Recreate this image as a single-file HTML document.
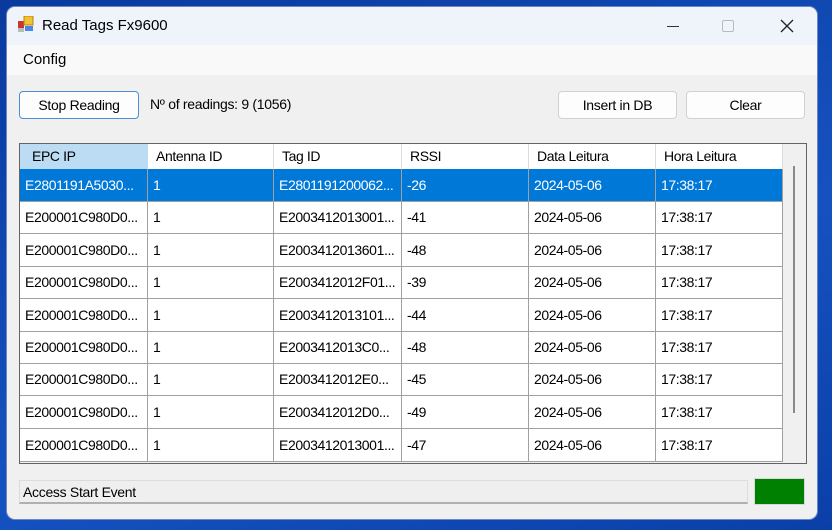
<!DOCTYPE html>
<html><head><style>
*{margin:0;padding:0;box-sizing:border-box}
body{width:832px;height:530px;overflow:hidden;background:linear-gradient(160deg,#0a3a9e,#1552c0 60%,#0b3fa8);font-family:"Liberation Sans",sans-serif;position:relative}
.win{position:absolute;left:7px;top:7px;width:810px;height:512px;background:#f0f0f0;border-radius:8px;overflow:hidden;box-shadow:0 0 0 1px #6b86c4}
.title{position:absolute;left:0;top:0;width:100%;height:38px;background:#eff3fa}
.menu{position:absolute;left:0;top:38px;width:100%;height:30px;background:#f9f9f9}
.abs{position:absolute}
.t{font-size:14px;color:#000;white-space:nowrap;letter-spacing:-0.3px}
.btn{position:absolute;height:28px;border:1px solid #d0d0d0;border-radius:4px;background:#fdfdfd;font-size:14px;text-align:center;line-height:26px;letter-spacing:-0.3px}
.grid{position:absolute;left:12px;top:136px;width:788px;height:321px;border:1px solid #646464;background:#f0f0f0}
.cell{position:absolute;font-size:14px;letter-spacing:-0.4px;padding-left:5px;white-space:nowrap;overflow:hidden;background:#fff;border-right:1px solid #a0a0a0;border-bottom:1px solid #a0a0a0}
</style></head><body>
<div class="win">
 <div class="title">
  <svg class="abs" style="left:11px;top:9px" width="17" height="17"><rect x="0" y="5" width="6" height="7" fill="#c33"/><rect x="6" y="0" width="9" height="9" fill="#f1c232" stroke="#b8860b" stroke-width="1"/><rect x="7" y="10" width="8" height="5" fill="#4a86e8"/><rect x="0" y="12" width="6" height="4" fill="#bbb"/></svg>
  <div class="abs t" style="left:35px;top:10px;font-size:15px;letter-spacing:0">Read Tags Fx9600</div>
  <div class="abs" style="left:660px;top:19px;width:12px;height:1px;background:#333"></div>
  <div class="abs" style="left:715px;top:13px;width:12px;height:12px;border:1px solid #bbb;border-radius:2px"></div>
  <svg class="abs" style="left:773px;top:12px" width="14" height="14"><path d="M1 1L13 13M13 1L1 13" stroke="#222" stroke-width="1.3"/></svg>
 </div>
 <div class="menu"><div class="abs t" style="left:16px;top:6px;font-size:15px;letter-spacing:0">Config</div></div>
 <div class="btn" style="left:12px;top:84px;width:120px;border-color:#4a90d9;border-width:1.5px">Stop Reading</div>
 <div class="abs t" style="left:143px;top:89px">Nº of readings: 9 (1056)</div>
 <div class="btn" style="left:551px;top:84px;width:119px">Insert in DB</div>
 <div class="btn" style="left:679px;top:84px;width:119px">Clear</div>
 <div class="grid" id="g"></div>
 <div class="abs" style="left:12px;top:473px;width:729px;height:24px;border:1px solid #dcdcdc;border-bottom:2px solid #b0b0b0;background:#efefef"><div class="t" style="padding:3px 0 0 3px">Access Start Event</div></div>
 <div class="abs" style="left:747px;top:471px;width:51px;height:27px;background:#008000;border:1px solid #d8d8d8"></div>
</div>
<script>
var g=document.getElementById('g');
var cx=[0,128,254,382,509,636,763];
var hd=["EPC IP","Antenna ID","Tag ID","RSSI","Data Leitura","Hora Leitura"];
var tags=["E2801191200062...","E2003412013001...","E2003412013601...","E2003412012F01...","E2003412013101...","E2003412013C0...","E2003412012E0...","E2003412012D0...","E2003412013001..."];
var rs=["-26","-41","-48","-39","-44","-48","-45","-49","-47"];
var ry=[0,24,57,89,122,154,187,219,251,284,317];
var h='';
for(var c=0;c<6;c++){h+='<div class="cell" style="left:'+cx[c]+'px;top:0;width:'+(cx[c+1]-cx[c])+'px;height:25px;line-height:24px;padding-left:'+(c==0?12:8)+'px;border-bottom:none;'+(c==0?'background:#bcdcf4;border-right:none':'border-right-color:#dcdcdc')+'">'+hd[c]+'</div>';}
for(var r=0;r<9;r++){var y=ry[r+1]+1,hh=ry[r+2]-ry[r+1];var v=[r==0?"E2801191A5030...":"E200001C980D0...","1",tags[r],rs[r],"2024-05-06","17:38:17"];
for(c=0;c<6;c++){var sel=r==0;h+='<div class="cell" style="left:'+cx[c]+'px;top:'+y+'px;width:'+(cx[c+1]-cx[c])+'px;height:'+hh+'px;line-height:'+(hh-1)+'px;'+(sel?'background:#0078d7;color:#fff;':'')+'">'+v[c]+'</div>';}}
h+='<div class="abs" style="left:773px;top:22px;width:2px;height:247px;background:#8a8a8a"></div>';
g.innerHTML=h;
</script>
</body></html>
